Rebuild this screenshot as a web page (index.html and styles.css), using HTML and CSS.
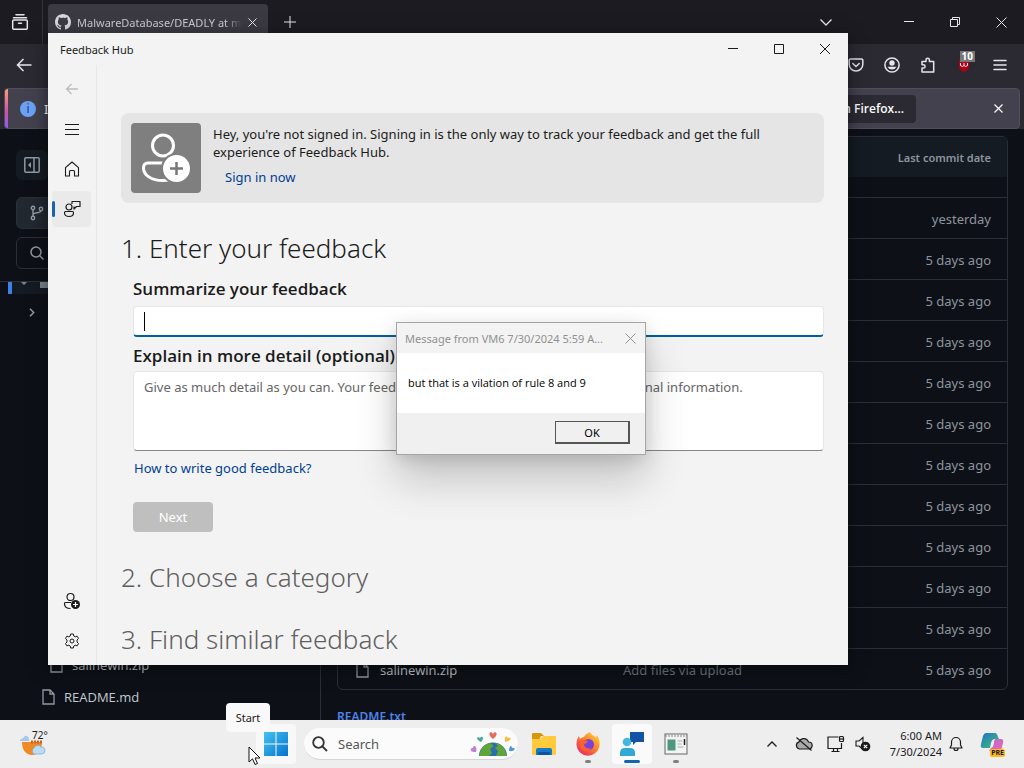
FILE: index.html
```html
<!DOCTYPE html>
<html lang="en">
<head>
  <meta charset="UTF-8">
  <meta name="viewport" content="width=device-width, initial-scale=1.0">
  <title>Feedback Hub</title>
  <link rel="stylesheet" href="styles.css">
</head>
<body>
  <!-- Browser -->
  <div class="browser">
    <div class="tab-bar">
      <button class="firefox-view" aria-label="Firefox View">
        <svg width="18" height="18" viewBox="0 0 18 18" fill="none" stroke="currentColor" stroke-width="1.5" stroke-linecap="round"><path d="M5 1.800h8M2.500 4.800h13"/><rect x="1.700" y="7" width="14.600" height="9.300" rx="1"/><path d="M7.500 10.200h3"/></svg>
      </button>
      <div class="tab">
        <svg width="16" height="16" viewBox="0 0 16 16" fill="#d6d5dc"><path d="M8 0C3.58 0 0 3.58 0 8c0 3.54 2.29 6.53 5.47 7.59.4.07.55-.17.55-.38 0-.19-.01-.82-.01-1.49-2.01.37-2.53-.49-2.69-.94-.09-.23-.48-.94-.82-1.13-.28-.15-.68-.52-.01-.53.63-.01 1.08.58 1.23.82.72 1.21 1.87.87 2.33.66.07-.52.28-.87.51-1.07-1.78-.2-3.64-.89-3.64-3.95 0-.87.31-1.59.82-2.15-.08-.2-.36-1.02.08-2.12 0 0 .67-.21 2.2.82.64-.18 1.32-.27 2-.27s1.36.09 2 .27c1.53-1.04 2.2-.82 2.2-.82.44 1.1.16 1.92.08 2.12.51.56.82 1.27.82 2.15 0 3.07-1.87 3.75-3.65 3.95.29.25.54.73.54 1.48 0 1.07-.01 1.93-.01 2.2 0 .21.15.46.55.38A8 8 0 0 0 16 8c0-4.42-3.58-8-8-8z"/></svg>
        <span class="tab-title">MalwareDatabase/DEADLY at main</span>
        <button aria-label="Close tab"><svg width="9" height="9" viewBox="0 0 9 9" stroke="currentColor"><path d="M.5.5l8 8M8.500.5l-8 8"/></svg></button>
      </div>
      <button class="new-tab" aria-label="New tab"><svg width="12" height="12" viewBox="0 0 12 12" stroke="currentColor"><path d="M6 0v12M0 6h12"/></svg></button>
      <div class="browser-controls">
        <button aria-label="List tabs"><svg width="12" height="7" viewBox="0 0 12 7" fill="none" stroke="currentColor" stroke-width="1.3"><path d="M.5.5L6 6l5.500-5.500"/></svg></button>
        <button class="minimize" aria-label="Minimize"><svg width="10" height="10" viewBox="0 0 10 10" stroke="currentColor"><path d="M0 4.500h10"/></svg></button>
        <button aria-label="Restore"><svg width="10" height="10" viewBox="0 0 10 10" fill="none" stroke="currentColor"><path d="M.5 2.500h7v7h-7zM2.500 2.500v-2h7v7h-2"/></svg></button>
        <button aria-label="Close"><svg width="11" height="11" viewBox="0 0 11 11" stroke="currentColor"><path d="M.5.5l10 10M10.500.5l-10 10"/></svg></button>
      </div>
    </div>

    <div class="toolbar">
      <button aria-label="Back"><svg width="16" height="14" viewBox="0 0 16 14" fill="none" stroke="currentColor" stroke-width="1.5"><path d="M15.500 7H1.500M7.500 1l-6 6 6 6"/></svg></button>
      <div class="toolbar-right">
        <button aria-label="Pocket"><svg width="16" height="16" viewBox="0 0 16 16" fill="none" stroke="currentColor" stroke-width="1.5" stroke-linecap="round"><path d="M2.500 2h11A1.300 1.300 0 0 1 14.800 3.300V7.500a6.800 6.500 0 0 1-13.600 0V3.300A1.300 1.300 0 0 1 2.500 2z"/><path d="M4.800 6.500L8 9.500l3.200-3"/></svg></button>
        <button aria-label="Account"><svg width="16" height="16" viewBox="0 0 16 16"><circle cx="8" cy="8" r="7.100" fill="none" stroke="currentColor" stroke-width="1.500"/><circle cx="8" cy="6" r="2.700" fill="currentColor"/><path d="M3.500 9.800h9A5 5 0 0 1 3.500 9.800z" fill="currentColor"/></svg></button>
        <button aria-label="Extensions"><svg width="16" height="16" viewBox="0 0 16 16" fill="none" stroke="currentColor" stroke-width="1.500" stroke-linejoin="round"><path d="M2 4.500h4V3a1.700 1.700 0 0 1 3.400 0v1.500h4.300V15H2v-4h1.500a1.600 1.600 0 0 0 0-3.200H2z"/></svg></button>
        <button class="ublock" aria-label="uBlock Origin, 10 blocked">
          <svg width="16" height="16" viewBox="0 0 16 16"><path d="M8 1l5 1.500V9c0 3-2 4.700-5 6-3-1.300-5-3-5-6V2.500z" fill="#b00016"/><path d="M4.500 6v2.500q1.800 2 3.500 0 1.700 2 3.500 0V6M8 6v2.500" fill="none" stroke="#eee"/></svg>
          <span class="badge">10</span>
        </button>
        <button aria-label="Menu"><svg width="14" height="12" viewBox="0 0 14 12" stroke="currentColor" stroke-width="1.500" stroke-linecap="round"><path d="M1 1.500h12M1 6h12M1 10.500h12"/></svg></button>
      </div>
    </div>

    <div class="notification">
      <span class="info">i</span>
      <span class="notification-text">It</span>
      <button class="refresh">Refresh Firefox…</button>
      <button class="dismiss" aria-label="Dismiss"><svg width="9" height="9" viewBox="0 0 9 9" stroke="currentColor" stroke-width="1.200"><path d="M.5.5l8 8M8.500.5l-8 8"/></svg></button>
    </div>

    <div class="page">
      <aside class="file-tree">
        <div class="tree-top">
          <button class="tree-btn plain" aria-label="Collapse file tree"><svg width="16" height="16" viewBox="0 0 16 16" fill="none" stroke="currentColor" stroke-width="1.500"><rect x=".8" y=".8" width="14.400" height="14.400" rx="1"/><path d="M10 1v14"/><path d="M7 5v6L4 8z" fill="currentColor" stroke="none"/></svg></button>
          <button class="tree-btn branch" aria-label="Branch"><svg width="14" height="16" viewBox="0 0 14 16" fill="none" stroke="currentColor" stroke-width="1.400"><circle cx="3" cy="3" r="1.700"/><circle cx="3" cy="13" r="1.700"/><circle cx="11" cy="4" r="1.700"/><path d="M3 4.700v6.600M11 5.700c0 3-8 1-8 4"/></svg></button>
          <button class="tree-btn search-files" aria-label="Search files"><svg width="14" height="14" viewBox="0 0 14 14" fill="none" stroke="currentColor" stroke-width="1.500"><circle cx="6" cy="6" r="5"/><path d="M9.500 9.500l4 4"/></svg></button>
          <div class="tree-current"><span><svg width="36" height="6" viewBox="0 0 36 6" fill="#7d848d"><path d="M9 0h6l-3 3zM28 0h8v6h-8z"/></svg></span></div>
          <button class="tree-expand" aria-label="Expand folder"><svg width="6" height="9" viewBox="0 0 6 9" fill="none" stroke="currentColor" stroke-width="1.500"><path d="M1 .8l3.700 3.700L1 8.200"/></svg></button>
        </div>
        <ul class="tree-files">
          <li class="nested"><svg class="file-icon" viewBox="0 0 13 16"><path d="M1 1h7l4 4v10H1zM8 1v4h4"/></svg><a href="#">salinewin.zip</a></li>
          <li><svg class="file-icon" viewBox="0 0 13 16"><path d="M1 1h7l4 4v10H1zM8 1v4h4"/></svg><a href="#">README.md</a></li>
        </ul>
      </aside>

      <div class="repo">
        <div class="repo-box">
          <table>
            <thead><tr><th></th><th></th><th class="date">Last commit date</th></tr></thead>
            <tbody>
              <tr class="parent"><td colspan="3"></td></tr>
              <tr><td></td><td></td><td class="date">yesterday</td></tr>
              <tr><td></td><td></td><td class="date">5 days ago</td></tr>
              <tr><td></td><td></td><td class="date">5 days ago</td></tr>
              <tr><td></td><td></td><td class="date">5 days ago</td></tr>
              <tr><td></td><td></td><td class="date">5 days ago</td></tr>
              <tr><td></td><td></td><td class="date">5 days ago</td></tr>
              <tr><td></td><td></td><td class="date">5 days ago</td></tr>
              <tr><td></td><td></td><td class="date">5 days ago</td></tr>
              <tr><td></td><td></td><td class="date">5 days ago</td></tr>
              <tr><td></td><td></td><td class="date">5 days ago</td></tr>
              <tr><td></td><td></td><td class="date">5 days ago</td></tr>
              <tr>
                <td class="name"><svg class="file-icon" viewBox="0 0 13 16"><path d="M1 1h7l4 4v10H1zM8 1v4h4"/></svg><a href="#">salinewin.zip</a></td>
                <td class="message">Add files via upload</td>
                <td class="date">5 days ago</td>
              </tr>
            </tbody>
          </table>
        </div>
        <a class="readme" href="#">README.txt</a>
      </div>
    </div>
  </div>

  <!-- Feedback Hub -->
  <div class="hub">
    <div class="hub-title">
      <span>Feedback Hub</span>
      <div class="hub-controls">
        <button aria-label="Minimize"><svg width="10" height="10" viewBox="0 0 10 10" stroke="currentColor"><path d="M0 4.500h10"/></svg></button>
        <button aria-label="Maximize"><svg width="10" height="10" viewBox="0 0 10 10" fill="none" stroke="currentColor"><path d="M.5.5h9v9H.5z"/></svg></button>
        <button aria-label="Close"><svg width="10" height="10" viewBox="0 0 10 10" stroke="currentColor"><path d="M0 0l10 10M10 0L0 10"/></svg></button>
      </div>
    </div>
    <div class="hub-body">
      <nav class="hub-nav">
        <button class="disabled" aria-label="Back"><svg width="14" height="12" viewBox="0 0 14 12" fill="none" stroke="currentColor" stroke-width="1.300"><path d="M13 6H1.500M6.500 1l-5 5 5 5"/></svg></button>
        <button aria-label="Menu"><svg width="16" height="12" viewBox="0 0 16 12" stroke="currentColor"><path d="M1 1.500h14M1 6.500h14M1 11.500h14"/></svg></button>
        <button aria-label="Home"><svg width="16" height="16" viewBox="0 0 16 16" fill="none" stroke="currentColor" stroke-width="1.100" stroke-linejoin="round"><path d="M1.500 6.700L8 1l6.500 5.700V15h-4v-4.500a1 1 0 0 0-1-1h-3a1 1 0 0 0-1 1V15h-4z"/></svg></button>
        <button class="active" aria-label="Feedback"><svg width="18" height="18" viewBox="0 0 18 18" fill="none" stroke="currentColor" stroke-width="1.200" stroke-linejoin="round"><circle cx="6" cy="7" r="3"/><path d="M2.500 11.500h7q1 0 1 1.200c0 2.500-2 3.800-4.500 3.800s-4.500-1.300-4.500-3.800q0-1.200 1-1.200zM9 4V1.500h8v5h-3.500L11 9V6.500"/></svg></button>
        <span class="nav-space"></span>
        <button aria-label="Add account"><svg width="18" height="18" viewBox="0 0 18 18" fill="none" stroke="currentColor" stroke-width="1.200"><circle cx="7.500" cy="5" r="3.500"/><path d="M8 10.500H2.500q-1 0-1 1.200c0 3 2.500 4.800 6 4.800"/><circle cx="12.500" cy="12.500" r="4.500" fill="currentColor" stroke="none"/><path d="M12.500 10v5M10 12.500h5" stroke="#fff"/></svg></button>
        <button aria-label="Settings"><svg width="16" height="16" viewBox="0 0 16 16" fill="none" stroke="currentColor" stroke-width="1" stroke-linejoin="round"><circle cx="8" cy="8" r="2"/><path d="M6.700 1h2.600l.5 2 1.400.8 2-.6 1.300 2.200L13 7v2l1.500 1.500-1.300 2.300-2-.6-1.400.8-.5 2H6.700l-.5-2-1.400-.8-2 .6-1.300-2.300L3 9V7L1.500 5.400l1.300-2.200 2 .6L6.200 3z"/></svg></button>
      </nav>
      <main class="hub-main">
        <section class="signin">
          <svg class="avatar" width="70" height="70" viewBox="0 0 70 70"><rect width="70" height="70" rx="4" fill="#7f7f7f"/><circle cx="32" cy="22.500" r="10.500" fill="none" stroke="#fff" stroke-width="3"/><path d="M32 40H17c-3 0-4.500 1.500-4.500 5 0 7 7.500 12.500 19.500 12.500 3 0 5-.3 7-1" fill="none" stroke="#fff" stroke-width="3"/><circle cx="45.500" cy="45.500" r="15.500" fill="#7f7f7f"/><circle cx="45.500" cy="45.500" r="13.500" fill="#fff"/><path d="M45.500 39v13M39 45.500h13" stroke="#777" stroke-width="2.500"/></svg>
          <div class="signin-text">
            <p>Hey, you're not signed in. Signing in is the only way to track your feedback and get the full experience of Feedback Hub.</p>
            <a href="#">Sign in now</a>
          </div>
        </section>
        <h1>1. Enter your feedback</h1>
        <form class="feedback-form">
          <label for="summary">Summarize your feedback</label>
          <div class="summary-field"><input type="text" id="summary"></div>
          <label for="details">Explain in more detail (optional)</label>
          <textarea id="details" placeholder="Give as much detail as you can. Your feedback is public. Please don't include personal information."></textarea>
          <a href="#">How to write good feedback?</a>
          <button type="submit" class="next" disabled>Next</button>
        </form>
        <h2>2. Choose a category</h2>
        <h2>3. Find similar feedback</h2>
      </main>
    </div>
  </div>

  <!-- Message box -->
  <div class="dialog" role="dialog" aria-labelledby="dialogTitle">
    <div class="dialog-title">
      <span id="dialogTitle">Message from VM6 7/30/2024 5:59 A...</span>
      <button aria-label="Close"><svg width="11" height="11" viewBox="0 0 11 11" stroke="currentColor"><path d="M.5.5l10 10M10.500.5l-10 10"/></svg></button>
    </div>
    <p>but that is a vilation of rule 8 and 9</p>
    <div class="dialog-footer"><button class="ok">OK</button></div>
  </div>

  <!-- Taskbar -->
  <footer class="taskbar">
    <div class="weather">
      <svg width="26" height="26" viewBox="0 0 26 26"><path d="M0 10c0-3 3-2 4-4 2-3 6 0 5 4z" fill="#a9c7ee"/><path d="M2 11h20c0 8-4 13-10 13S2 19 2 11z" fill="#f08a24"/><path d="M11 11h11" stroke="#d45f1c" stroke-width="3" stroke-dasharray="2 1"/><path d="M14 23a3.500 3.500 0 0 1 0-6 4 4 0 0 1 7-1 3.500 3.500 0 0 1 1 7z" fill="#bcdcf5" stroke="#74a9d8" stroke-width=".7"/></svg>
      <span>72°</span>
    </div>
    <div class="apps">
      <button class="app start" aria-label="Start">
        <svg width="24" height="24" viewBox="0 0 24 24"><defs><linearGradient id="win" x2="1" y2="1"><stop stop-color="#45c3f2"/><stop offset="1" stop-color="#0473cf"/></linearGradient></defs><path d="M0 0h11.500v11.500H0zM12.500 0H24v11.500H12.500zM0 12.500h11.500V24H0zM12.500 12.500H24V24H12.500z" fill="url(#win)"/></svg>
        <span class="tooltip">Start</span>
      </button>
      <label class="search">
        <svg width="16" height="16" viewBox="0 0 16 16" fill="none" stroke="#333" stroke-width="1.800"><circle cx="6.500" cy="6.500" r="5.300"/><path d="M10.500 10.500l4.500 4.500"/></svg>
        <input type="text" placeholder="Search" aria-label="Search">
        <svg class="earth" width="46" height="26" viewBox="0 0 46 26"><path d="M9 25a14 13.500 0 0 1 28 0z" fill="#2c6dab"/><path d="M10 21q3-8 10-9l4 3-4 3 2 4-3 3H9zM25 12q8 1 10 7l2 6H26l2-5-3-3 3-2z" fill="#5fa53a"/><path d="M23 8c-7-5-2-9 0-5 2-4 7 0 0 5z" fill="#e96a5b"/><path d="M11 11c-6-3-4-6-1-4 2-3 5 0 1 4z" fill="#46a89b"/><path d="M35 11c-1-7 2-6 3-4 4-1 4 3-3 4z" fill="#f8b93f"/><path d="M6 21C-1 22 0 16 3 17c0-4 5-2 3 4z" fill="#b982c9"/><path d="M39 20c0-6 3-6 3-3 4-1 4 4-3 3z" fill="#5297da"/></svg>
      </label>
      <button class="app" aria-label="File Explorer"><svg width="26" height="24" viewBox="0 0 26 24"><path d="M1 2q0-1 1-1h8l3 3h-3L8 8H1z" fill="#d8960c"/><path d="M1 7h8l3-3h12q1 0 1 1v17q0 1-1 1H2q-1 0-1-1z" fill="#ffcb3d"/><path d="M5 23v-5q0-2 2-2h12q2 0 2 2v5z" fill="#1678c7"/><path d="M7 23v-3h12v3" fill="#0b569e"/></svg></button>
      <button class="app running" aria-label="Firefox"><svg width="24" height="24" viewBox="0 0 24 24"><defs><linearGradient id="fx" x1="1" x2=".2" y2="1"><stop stop-color="#ffe63b"/><stop offset=".45" stop-color="#ff8b26"/><stop offset="1" stop-color="#e82765"/></linearGradient></defs><path d="M14 0c1 3 4 3 6 6l1-3c2 3 3 7 2.500 11A11.600 11.600 0 0 1 .5 13C.3 9 1.500 6 3 4l1 3c1-1 2-2 4-2 1-2 3-4 6-5z" fill="url(#fx)"/><circle cx="12.500" cy="12.500" r="5.500" fill="#7543db"/><path d="M4 9c3-2 5 0 8 0 0 2-3 2-4 4 1 3 4 4 7 3-2 4-8 4-10 0q-2-3-1-7z" fill="#f9612e"/></svg></button>
      <button class="app current" aria-label="Feedback Hub"><svg width="26" height="26" viewBox="0 0 26 26"><path d="M11 1h14v10h-8l-3 3v-3h-3z" fill="#1254a6"/><circle cx="8" cy="11" r="4.300" fill="#43b7dd"/><path d="M1 25v-3q0-5 5-5h5q5 0 5 5v3z" fill="#32a9d4"/></svg></button>
      <button class="app running" aria-label="Script host"><svg width="24" height="22" viewBox="0 0 24 22"><rect x="1" y="1" width="22" height="20" fill="#f3f3f3" stroke="#666"/><path d="M1 3h22" stroke="#888" stroke-width="1" stroke-dasharray="2 1"/><rect x="3.500" y="6.500" width="8" height="11" fill="#4e9880"/><path d="M13.500 8h5M13.500 11h4M13.500 14h6" stroke="#bccbc6" stroke-width="1.500"/><path d="M20.500 6v6" stroke="#222" stroke-width="1.500"/></svg></button>
    </div>
    <div class="tray">
      <button aria-label="Show hidden icons"><svg width="10" height="6" viewBox="0 0 10 6" fill="none" stroke="currentColor" stroke-width="1.300"><path d="M.5 5.500L5 1l4.500 4.500"/></svg></button>
      <button aria-label="OneDrive"><svg width="18" height="14" viewBox="0 0 18 14" fill="#aaa" stroke="currentColor" stroke-width="1.200"><path d="M4.500 12a3.700 3.700 0 0 1-.4-7.200A5 5 0 0 1 13.500 5a3.500 3.500 0 0 1 .3 7z"/><path d="M1.500.5l15 13"/></svg></button>
      <button class="network" aria-label="Network"><svg width="18" height="18" viewBox="0 0 18 18" fill="none" stroke="currentColor" stroke-width="1.200"><path d="M11.500 2H1v11.500h13.500V8M4.500 16.500h8M6.500 13.500v3M10.500 13.500v3"/><rect x="12.500" y="1.500" width="4" height="5" rx="1"/><path d="M13 4h3"/></svg></button>
      <button class="volume" aria-label="Volume muted"><svg width="16" height="16" viewBox="0 0 16 16" fill="none" stroke="currentColor" stroke-width="1.100"><path d="M1 5h3l4-3.500v12L4 10H1z"/><circle cx="10.500" cy="10.500" r="4.800" fill="currentColor" stroke="none"/><path d="M8.800 8.800l3.400 3.400M12.200 8.800l-3.400 3.400" stroke="#fff"/></svg></button>
      <div class="clock"><span>6:00 AM</span><span>7/30/2024</span></div>
      <button aria-label="Notifications"><svg width="14" height="16" viewBox="0 0 14 16" fill="none" stroke="currentColor" stroke-width="1.200" stroke-linejoin="round"><path d="M1 12l1.500-3V6a4.500 4.500 0 0 1 9 0v3l1.500 3zM5 12.500a2 2 0 0 0 4 0"/></svg></button>
      <button class="copilot" aria-label="Copilot">
        <svg width="24" height="24" viewBox="0 0 24 24"><defs><linearGradient id="cpA" y2="1"><stop stop-color="#2173c9"/><stop offset="1" stop-color="#43c36f"/></linearGradient><linearGradient id="cpB" y2="1"><stop stop-color="#a66be8"/><stop offset="1" stop-color="#f66aa0"/></linearGradient></defs><path d="M6 1h9q2 0 3 4l1 2h-4q-3 0-4 4l-1 5H3q-3 0-2-4L3 4q1-3 3-3z" fill="url(#cpA)"/><path d="M16 7h5q3 0 2 4l-2 8H9l2-3q2 0 3-5 0-4 2-4z" fill="url(#cpB)"/></svg>
        <span class="pre">PRE</span>
      </button>
    </div>
  </footer>

  <svg class="cursor" width="13" height="20" viewBox="0 0 13 20"><path d="M1 1v15l3.500-3.200L7 18.500l2.500-1L7 12h5z" fill="#fff" stroke="#111"/></svg>
</body>
</html>
```

FILE: styles.css
```css
* {
  margin: 0;
  padding: 0;
  box-sizing: border-box;
}

body {
  height: 100vh;
  display: flex;
  flex-direction: column;
  overflow: hidden;
  position: relative;
  background: #0d1117;
  font-family: 'Noto Sans', 'Open Sans', sans-serif;
  font-size: 13px;
}

button {
  border: none;
  background: none;
  color: inherit;
  font: inherit;
  display: flex;
  align-items: center;
  justify-content: center;
}

a {
  text-decoration: none;
}

svg {
  display: block;
  flex: none;
}

/* Browser */
.browser {
  flex: 1;
  min-height: 0;
  display: flex;
  flex-direction: column;
  overflow: hidden;
  background: #2b2a33;
  color: #e6e5ee;
}

.tab-bar {
  height: 44px;
  flex: none;
  display: flex;
  align-items: stretch;
  background: #1c1b22;
}

.firefox-view {
  width: 43px;
  border-right: 1px solid #34333c;
  padding-right: 2px;
}

.tab {
  width: 220px;
  margin: 4px 0 4px 5px;
  padding: 0 11px 0 7px;
  display: flex;
  align-items: center;
  gap: 6px;
  border-radius: 4px;
  background: #3b3942;
}

.tab-title {
  flex: 1;
  overflow: hidden;
  white-space: nowrap;
  font-size: 11px;
  color: #c9c8d0;
  -webkit-mask-image: linear-gradient(90deg, #000 90%, transparent);
  mask-image: linear-gradient(90deg, #000 90%, transparent);
}

.new-tab {
  width: 44px;
}

.browser-controls {
  margin-left: auto;
  display: flex;
}

.browser-controls button {
  width: 46px;
}

.browser-controls .minimize {
  margin-left: 37px;
}

.toolbar {
  height: 41px;
  flex: none;
  display: flex;
  align-items: center;
  justify-content: space-between;
  padding: 0 6px;
}

.toolbar button {
  width: 36px;
  height: 40px;
}

.toolbar-right {
  display: flex;
}

.toolbar .ublock {
  position: relative;
}

.badge {
  position: absolute;
  top: 6px;
  right: 7px;
  padding: 0 2px;
  background: #777;
  color: #fff;
  font-size: 10px;
  line-height: 11px;
  font-weight: 700;
}

.notification {
  flex: none;
  height: 41px;
  margin: 3px 4px 0;
  display: flex;
  align-items: center;
  position: relative;
  padding-left: 15px;
  border: 1px solid #504d5c;
  border-radius: 4px;
  background: #42414d;
  color: #fbfbfe;
  overflow: hidden;
}

.notification::before {
  content: '';
  position: absolute;
  top: 0;
  bottom: 0;
  left: 0;
  width: 3px;
  background: linear-gradient(#ff9d72, #d34ca8 60%, #9059ff);
}

.info {
  width: 16px;
  height: 16px;
  border-radius: 50%;
  background: #6ba2f5;
  color: #263d68;
  text-align: center;
  font-size: 12px;
  line-height: 16px;
}

.notification-text {
  flex: 1;
  margin-left: 8px;
}

.refresh {
  height: 28px;
  padding: 0 12px;
  border-radius: 4px;
  background: #2b2a33;
  font-family: 'Open Sans', sans-serif;
  font-size: 12px;
  font-weight: 600;
}

.dismiss {
  width: 36px;
  height: 32px;
  margin: 0 3px 0 64px;
}

.page {
  flex: 1;
  min-height: 0;
  display: flex;
  background: #0d1117;
  overflow: hidden;
}

.file-tree {
  width: 321px;
  flex: none;
  display: flex;
  flex-direction: column;
  justify-content: space-between;
  padding: 21px 0 7px;
  border-right: 1px solid #2a3038;
  color: #9198a1;
}

.tree-top {
  display: flex;
  flex-direction: column;
  align-items: flex-start;
}

.tree-btn {
  height: 32px;
  margin: 0 0 8px 16px;
  padding: 0 13px;
  border: 1px solid #2a3038;
  border-radius: 6px;
}

.tree-btn.plain {
  height: 30px;
  width: 32px;
  margin-bottom: 17px;
  padding: 0;
  border: none;
  background: #151b23;
}

.tree-btn.branch {
  width: 128px;
  justify-content: flex-start;
  background: #212830;
}

.tree-btn.search-files {
  width: 288px;
  justify-content: flex-start;
}

.tree-current {
  width: 100%;
  height: 17px;
  margin-top: 4px;
  padding-left: 8px;
  border-top: 1px solid #2a3038;
}

.tree-current span {
  display: block;
  width: 48px;
  height: 12px;
  border-left: 4px solid #3f7fe8;
  background: #151b23;
}

.tree-expand {
  width: 16px;
  height: 24px;
  margin: 2px 0 0 24px;
}

.tree-files {
  list-style: none;
}

.tree-files li {
  height: 32px;
  display: flex;
  align-items: center;
  gap: 9px;
  padding-left: 42px;
}

.tree-files .nested {
  padding-left: 50px;
}

.tree-files a,
.name a {
  color: #c3c9d0;
}

.file-tree,
.name {
  font-family: 'Open Sans', sans-serif;
}

.file-icon {
  width: 13px;
  height: 16px;
  fill: none;
  stroke: #9198a1;
  stroke-width: 1.3;
}

.repo {
  flex: 1;
  min-width: 0;
  padding: 7px 16px 0;
  color: #8d949e;
}

.repo-box {
  border: 1px solid #2a3038;
  border-radius: 6px;
  overflow: hidden;
}

.repo table {
  width: 100%;
  border-collapse: collapse;
  table-layout: fixed;
}

.repo th {
  height: 40px;
  background: #151b23;
  font-size: 11px;
  font-weight: 600;
}

.repo td {
  height: 41px;
  padding-top: 2px;
  border-top: 1px solid #2a3038;
}

.repo .parent td {
  height: 20px;
  border: none;
}

.repo td.name {
  display: flex;
  align-items: center;
  gap: 11px;
  padding-left: 18px;
}

.repo .message {
  padding-left: 62px;
  color: #6f7680;
}

.repo .date {
  padding-right: 16px;
  text-align: right;
}

.readme {
  display: block;
  margin-top: 18px;
  color: #4d82e8;
  font-size: 12px;
  font-weight: 600;
}

/* Feedback Hub window */
.hub {
  position: absolute;
  top: 33px;
  left: 48px;
  right: 176px;
  bottom: 103px;
  display: flex;
  flex-direction: column;
  background: #f3f3f3;
  color: #1b1b1b;
  box-shadow: 0 4px 16px rgba(0, 0, 0, 0.5);
}

.hub-title {
  height: 32px;
  flex: none;
  display: flex;
  align-items: center;
  justify-content: space-between;
  padding-left: 12px;
  font-size: 11px;
}

.hub-controls {
  display: flex;
}

.hub-controls button {
  width: 46px;
  height: 32px;
}

.hub-body {
  flex: 1;
  min-height: 0;
  display: flex;
}

.hub-nav {
  width: 49px;
  flex: none;
  display: flex;
  flex-direction: column;
  padding: 6px 5px 6px 4px;
  gap: 4px;
  border-right: 1px solid #e8e8e8;
}

.hub-nav button {
  height: 36px;
  border-radius: 4px;
}

.hub-nav .disabled {
  color: #bdbdbd;
}

.hub-nav .active {
  background: #eaeaea;
  position: relative;
}

.hub-nav .active::before {
  content: '';
  position: absolute;
  left: 0;
  width: 3px;
  height: 16px;
  border-radius: 2px;
  background: #1b62b5;
}

.nav-space {
  flex: 1;
}

.hub-main {
  flex: 1;
  min-width: 0;
  padding: 48px 24px 0;
  overflow: hidden;
}

.signin {
  display: flex;
  gap: 12px;
  padding: 10px;
  border-radius: 8px;
  background: #e5e5e5;
}

.signin-text {
  flex: 1;
  line-height: 18px;
  padding-top: 2px;
}

.signin-text a {
  display: inline-block;
  margin: 7px 12px 0;
}

.hub a {
  color: #003e92;
}

.hub h1,
.hub h2 {
  font-size: 26px;
  font-weight: 300;
  line-height: 38px;
}

.hub h1 {
  margin-top: 26px;
}

.hub h2 {
  margin-bottom: 24px;
  color: #5f5f5f;
}

.feedback-form {
  display: flex;
  flex-direction: column;
  align-items: flex-start;
  padding: 9px 0 26px 12px;
}

.feedback-form label {
  font-family: 'Open Sans', sans-serif;
  font-size: 17px;
  font-weight: 600;
  line-height: 26px;
}

.summary-field {
  position: relative;
  align-self: stretch;
  margin: 4px 0 6px;
}

/* Text caret */
.summary-field::after {
  content: '';
  position: absolute;
  top: 6px;
  left: 11px;
  width: 1px;
  height: 19px;
  background: #000;
}

.feedback-form input {
  display: block;
  width: 100%;
  height: 31px;
  padding: 0 11px;
  border: 1px solid #e6e6e6;
  border-bottom: 2px solid #00609c;
  border-radius: 4px;
  background: #fff;
}

.feedback-form textarea {
  align-self: stretch;
  height: 80px;
  margin: 2px 0 8px;
  padding: 6px 10px;
  border: 1px solid #e6e6e6;
  border-bottom-color: #868686;
  border-radius: 4px;
  background: #fff;
  font: inherit;
  line-height: 18px;
  resize: none;
}

.feedback-form textarea::placeholder {
  color: #666;
}

.feedback-form a {
  line-height: 18px;
  margin-left: 1px;
}

.next {
  width: 80px;
  height: 30px;
  margin-top: 25px;
  border-radius: 4px;
  background: #bfbfbf;
  color: #fff;
}

/* Message box */
.dialog {
  position: absolute;
  top: 322px;
  left: 396px;
  width: 250px;
  border: 1px solid #a5a5a5;
  background: #fff;
  color: #000;
  box-shadow: 0 24px 40px rgba(0, 0, 0, 0.2), 0 4px 16px rgba(0, 0, 0, 0.12);
}

.dialog-title {
  height: 30px;
  display: flex;
  align-items: center;
  justify-content: space-between;
  padding: 0 9px 0 8px;
  background: #f3f3f3;
  color: #919191;
  font-size: 11px;
}

.dialog p {
  padding: 20px 11px;
  font-family: 'Open Sans', sans-serif;
  font-size: 11px;
  line-height: 20px;
}

.dialog-footer {
  display: flex;
  justify-content: flex-end;
  padding: 8px 15px 10px;
  background: #f0f0f0;
}

.ok {
  width: 75px;
  height: 23px;
  border: 1px solid #555;
  border-right-width: 2px;
  border-bottom-width: 2px;
  background: #f0f0f0;
  font-size: 11px;
}

/* Taskbar */
.taskbar {
  height: 48px;
  flex: none;
  display: flex;
  align-items: center;
  background: #eee;
  color: #1b1b1b;
  font-size: 12px;
}

.weather {
  flex: 1;
  display: flex;
  padding-left: 20px;
  position: relative;
}

.weather span {
  position: absolute;
  left: 32px;
  top: -3px;
  font-size: 10px;
  line-height: 14px;
}

.apps {
  display: flex;
  align-items: center;
  gap: 4px;
}

.app {
  width: 40px;
  height: 40px;
  border-radius: 4px;
  position: relative;
}

.start {
  background: #f8f8f8;
}

.tooltip {
  position: absolute;
  left: -30px;
  bottom: 32px;
  width: 44px;
  padding: 6px 0;
  border-radius: 4px;
  background: #f9f9f9;
  font-size: 11px;
  line-height: 17px;
  text-align: center;
}

.search {
  width: 214px;
  height: 32px;
  display: flex;
  align-items: center;
  margin: 0 2px 0 4px;
  padding: 0 2px 0 8px;
  border-radius: 16px;
  border-bottom: 1px solid #d5d5d5;
  background: #fbfbfb;
}

.search input {
  flex: 1;
  min-width: 0;
  padding-left: 10px;
  border: none;
  background: none;
  font: inherit;
  font-size: 13px;
}

.search input::placeholder {
  color: #555;
}

.current {
  background: #fafafa;
}

.running::after,
.current::after {
  content: '';
  position: absolute;
  bottom: 1px;
  width: 6px;
  height: 3px;
  border-radius: 2px;
  background: #808080;
}

.current::after {
  width: 16px;
  background: #1264b0;
}

.tray {
  margin-left: 58px;
  padding-right: 12px;
  display: flex;
  align-items: center;
}

.tray button {
  width: 28px;
  height: 40px;
}

.tray button:first-child {
  width: 36px;
}

.tray .network {
  width: 36px;
}

.tray .volume {
  width: 18px;
}

.clock {
  width: 70px;
  display: flex;
  flex-direction: column;
  align-items: flex-end;
  font-size: 11px;
  line-height: 16px;
}

.tray .copilot {
  width: 40px;
  margin-left: 2px;
  position: relative;
}

.pre {
  position: absolute;
  right: 7px;
  bottom: 7px;
  padding: 0 1px;
  border-radius: 2px;
  background: #ffb91d;
  font-size: 7px;
  line-height: 8px;
  font-weight: 700;
}

/* Mouse pointer */
.cursor {
  position: absolute;
  left: 248px;
  bottom: 2px;
}
```
